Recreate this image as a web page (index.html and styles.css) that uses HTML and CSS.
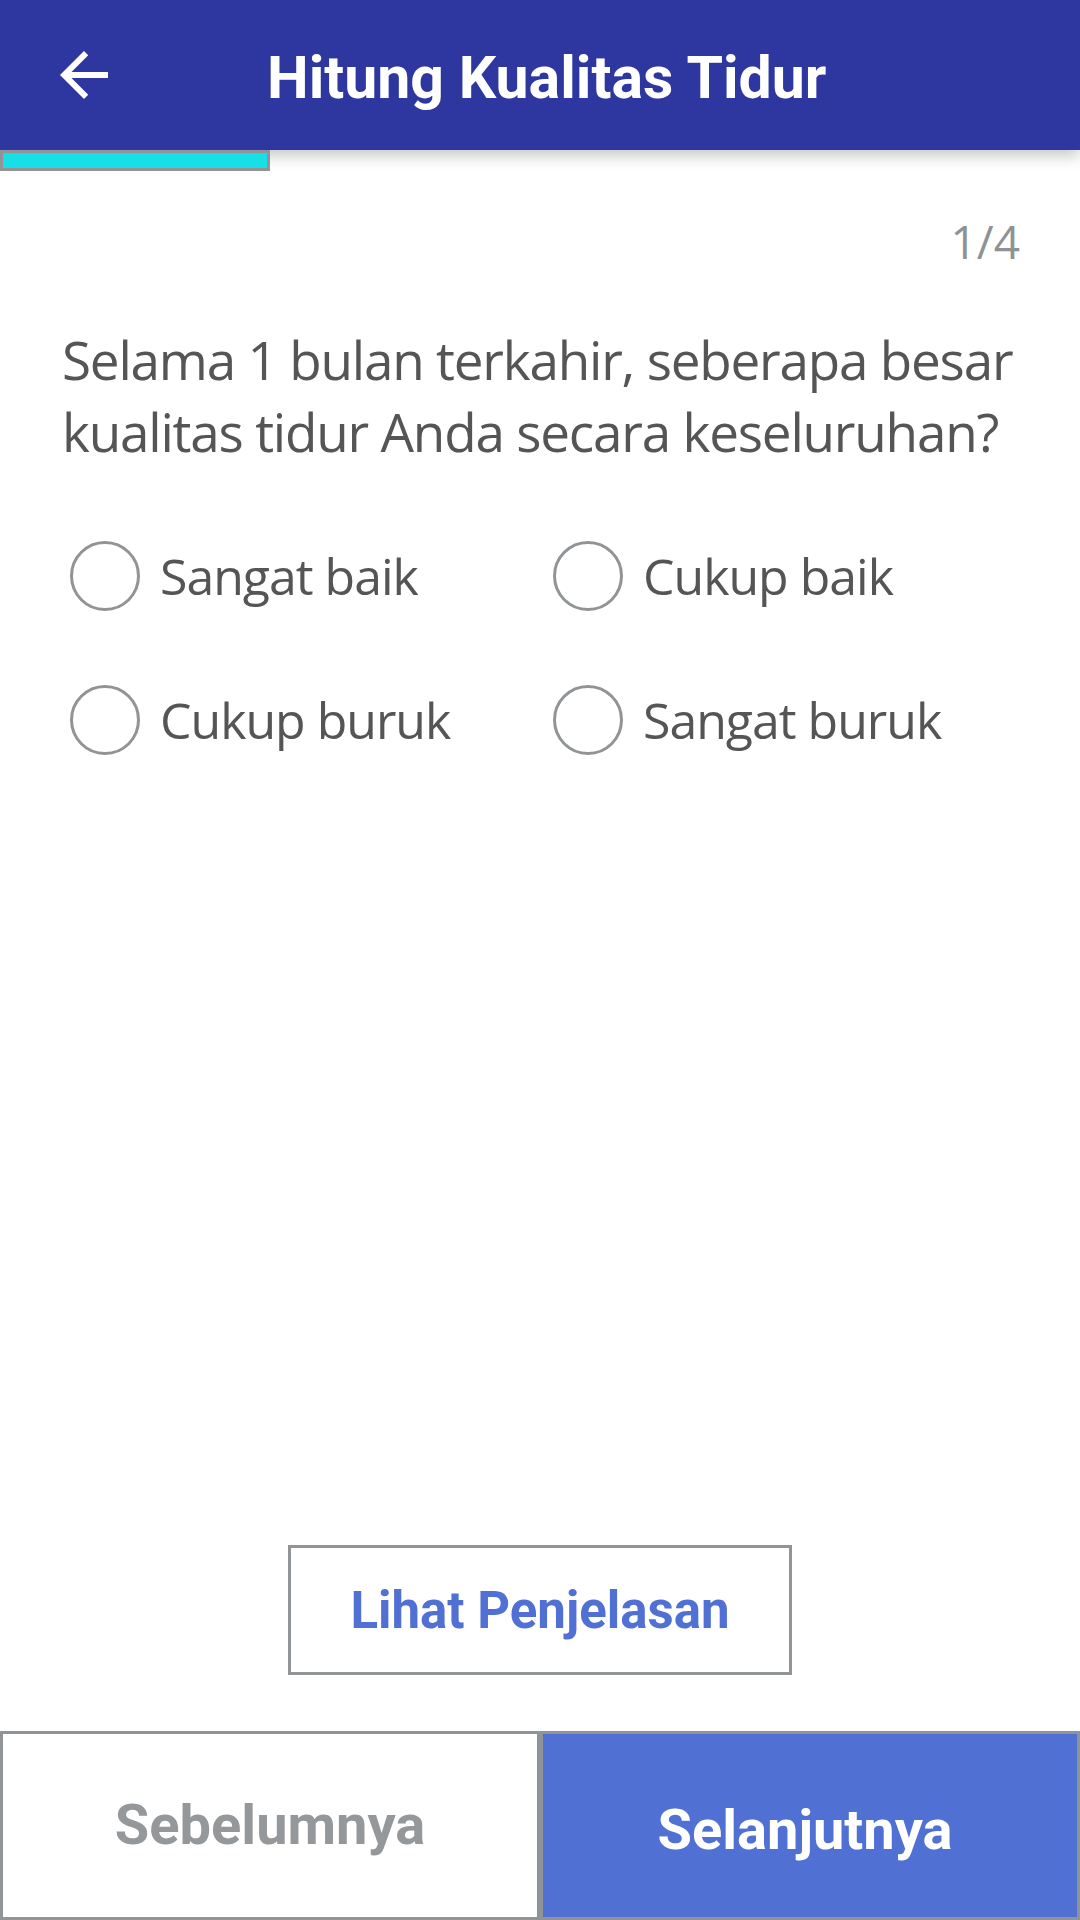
FILE: index.html
```html
<!DOCTYPE html>
<html lang="id">
<head>
<meta charset="utf-8">
<title>Hitung Kualitas Tidur</title>
<link rel="stylesheet" href="styles.css">
</head>
<body>
<div class="app">
  <header class="header">
    <svg class="back" viewBox="0 0 24 24" width="72" height="72"><path fill="#fff" d="M20 11H7.83l5.59-5.59L12 4l-8 8 8 8 1.41-1.41L7.83 13H20v-2z"/></svg>
    <h1 class="title">Hitung Kualitas Tidur</h1>
  </header>
  <div class="progress"></div>
  <main class="content">
    <div class="counter">1/4</div>
    <p class="question">Selama 1 bulan terkahir, seberapa besar kualitas tidur Anda secara keseluruhan?</p>
    <div class="options">
      <label class="option"><span class="radio"></span><span class="label">Sangat baik</span></label>
      <label class="option"><span class="radio"></span><span class="label">Cukup baik</span></label>
      <label class="option"><span class="radio"></span><span class="label">Cukup buruk</span></label>
      <label class="option"><span class="radio"></span><span class="label">Sangat buruk</span></label>
    </div>
  </main>
  <div class="explain-wrap">
    <button class="explain">Lihat Penjelasan</button>
  </div>
  <nav class="bottom">
    <button class="nav-btn prev">Sebelumnya</button>
    <button class="nav-btn next">Selanjutnya</button>
  </nav>
</div>
</body>
</html>
```

FILE: styles.css
```css
* { box-sizing: border-box; }
html, body { margin: 0; padding: 0; background: #fff; }
.app {
  width: 1080px;
  height: 1920px;
  display: flex;
  flex-direction: column;
  overflow: hidden;
}
.header {
  height: 150px;
  flex: none;
  background: #2E37A0;
  display: flex;
  align-items: center;
  position: relative;
  z-index: 2;
  box-shadow: 0 6px 14px rgba(0,0,0,0.22);
}
.back {
  margin-left: 48px;
  flex: none;
}
.title {
  margin: 0 0 0 147px;
  font-family: Roboto, "Liberation Sans", sans-serif;
  font-weight: 700;
  font-size: 59px;
  color: #fff;
  line-height: 1;
  position: relative;
  top: 2px;
}
.progress {
  width: 270px;
  height: 21px;
  flex: none;
  background: #16E0E6;
  border: 3px solid #919496;
  position: relative;
  z-index: 3;
}
.content {
  flex: 1;
  padding: 0 60px 0 62px;
  font-family: "Open Sans", "Noto Sans", sans-serif;
}
.counter {
  text-align: right;
  color: #8E9295;
  font-size: 46px;
  line-height: 60px;
  margin-top: 40px;
}
.question {
  margin: 53px 0 0 0;
  color: #555;
  font-size: 53px;
  line-height: 72px;
  letter-spacing: -1.2px;
}
.options {
  display: grid;
  grid-template-columns: 483px 483px;
  grid-auto-rows: 144px;
  margin-top: 72px;
  margin-left: 8px;
}
.option {
  display: flex;
  align-items: center;
  height: 72px;
}
.radio {
  width: 70px;
  height: 70px;
  border: 3px solid #919496;
  border-radius: 50%;
  flex: none;
}
.label {
  margin-left: 20px;
  color: #555;
  font-size: 50px;
  letter-spacing: -1px;
}
.explain-wrap {
  flex: none;
  display: flex;
  justify-content: center;
  padding-bottom: 56px;
}
.explain {
  width: 504px;
  height: 130px;
  background: #fff;
  border: 3px solid #919496;
  color: #5170D3;
  font-family: Roboto, "Liberation Sans", sans-serif;
  font-weight: 700;
  font-size: 51px;
  padding: 0;
}
.bottom {
  flex: none;
  height: 189px;
  display: flex;
}
.nav-btn {
  width: 540px;
  height: 189px;
  border: 3px solid #919496;
  font-family: Roboto, "Liberation Sans", sans-serif;
  font-weight: 700;
  font-size: 56px;
  padding: 0;
}
.prev {
  background: #fff;
  color: #95989B;
  padding-bottom: 2px;
}
.next {
  background: #5170D3;
  color: #fff;
  padding-top: 8px;
  padding-right: 10px;
}
```
